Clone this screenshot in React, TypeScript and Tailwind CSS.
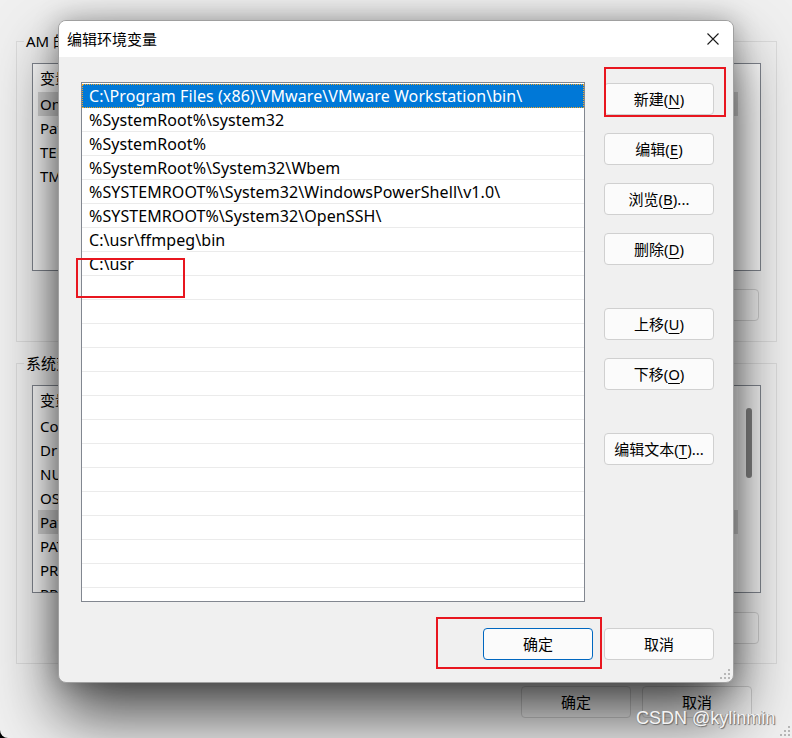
import React from "react";

const UI: React.CSSProperties = {
  fontFamily: '"Noto Sans", "Noto Sans CJK SC", sans-serif',
};

function U({ children }: { children: React.ReactNode }) {
  return <span className="underline decoration-1 underline-offset-[3px]">{children}</span>;
}

function WinButton({
  children,
  primary,
  faded,
}: {
  children?: React.ReactNode;
  primary?: boolean;
  faded?: boolean;
}) {
  return (
    <div
      className={`flex h-[32px] w-[110px] shrink-0 items-center justify-center rounded-[4px] border text-[15px] leading-none text-black ${
        primary ? "border-[#0067c0]" : faded ? "border-[#cfcfcf]" : "border-[#d0d0d0]"
      } ${faded ? "bg-[#f3f3f3]" : "bg-[#fbfbfb]"}`}
    >
      {children}
    </div>
  );
}

function Grip() {
  return (
    <svg width="10" height="10" viewBox="0 0 10 10">
      <rect x="8" y="0" width="2" height="2" fill="#b8b8b8" />
      <rect x="4" y="4" width="2" height="2" fill="#b8b8b8" />
      <rect x="8" y="4" width="2" height="2" fill="#b8b8b8" />
      <rect x="0" y="8" width="2" height="2" fill="#b8b8b8" />
      <rect x="4" y="8" width="2" height="2" fill="#b8b8b8" />
      <rect x="8" y="8" width="2" height="2" fill="#b8b8b8" />
    </svg>
  );
}

function BgList({
  items,
  selected,
  scrollbar,
}: {
  items: string[];
  selected: number;
  scrollbar?: boolean;
}) {
  return (
    <div className="flex h-[208px] w-[729px] overflow-hidden border border-[#828790] bg-white">
      <div className="flex-1">
        <div className="flex h-[28px] items-center pl-[7px] text-[15px] text-black">变量</div>
        {items.map((it, i) => (
          <div
            key={i}
            className={`ml-[5px] flex h-[24px] w-[700px] items-center pl-[2px] text-[15px] text-black ${
              i === selected ? "bg-[#d9d9d9]" : ""
            }`}
          >
            {it}
          </div>
        ))}
      </div>
      {scrollbar ? (
        <div className="flex w-[22px] shrink-0 justify-center bg-[#f7f7f7] pt-[22px]">
          <div className="h-[70px] w-[6px] rounded-[3px] bg-[#858585]" />
        </div>
      ) : null}
    </div>
  );
}

function GroupBox({
  title,
  children,
}: {
  title: string;
  children: React.ReactNode;
}) {
  return (
    <div className="relative h-[301px] w-[761px] border border-[#dcdcdc] px-[15px] pt-[21px]">
      <div className="absolute left-[7px] top-[-12px] bg-[#f0f0f0] px-[2px] text-[15px] leading-[22px] text-black">
        {title}
      </div>
      {children}
    </div>
  );
}

const paths = [
  "C:\\Program Files (x86)\\VMware\\VMware Workstation\\bin\\",
  "%SystemRoot%\\system32",
  "%SystemRoot%",
  "%SystemRoot%\\System32\\Wbem",
  "%SYSTEMROOT%\\System32\\WindowsPowerShell\\v1.0\\",
  "%SYSTEMROOT%\\System32\\OpenSSH\\",
  "C:\\usr\\ffmpeg\\bin",
  "C:\\usr",
];

export default function App() {
  const rows = [...paths, ...Array.from({ length: 15 }, () => "")];
  return (
    <div className="relative h-[738px] w-[792px] overflow-hidden bg-black" style={UI}>
      {/* Background window: 环境变量 */}
      <div className="flex h-full w-full flex-col rounded-bl-[8px] bg-[#f0f0f0] pl-[16px] pt-[41px]">
        <GroupBox title="AM 的用户变量(U)">
          <BgList items={["OneDrive", "Path", "TEMP", "TMP"]} selected={0} />
          <div className="mt-[18px] flex justify-end gap-[11px] pr-[2px]">
            <WinButton faded>新建(N)...</WinButton>
            <WinButton faded>编辑(E)...</WinButton>
            <WinButton faded>删除(D)</WinButton>
          </div>
        </GroupBox>
        <div className="mt-[21px]">
          <GroupBox title="系统变量(S)">
            <BgList
              items={[
                "ComSpec",
                "DriverData",
                "NUMBER_OF_PROCESSORS",
                "OS",
                "Path",
                "PATHEXT",
                "PROCESSOR_ARCHITECTURE",
                "PROCESSOR_IDENTIFIER",
              ]}
              selected={4}
              scrollbar
            />
            <div className="mt-[19px] flex justify-end gap-[11px] pr-[2px]">
              <WinButton faded>新建(W)...</WinButton>
              <WinButton faded>编辑(I)...</WinButton>
              <WinButton faded>删除(L)</WinButton>
            </div>
          </GroupBox>
        </div>
        <div className="mt-[22px] flex justify-end gap-[11px] pr-[40px]">
          <WinButton faded>确定</WinButton>
          <WinButton faded>取消</WinButton>
        </div>
      </div>
      <div className="absolute bottom-[2px] right-[2px]">
        <Grip />
      </div>

      {/* Dialog: 编辑环境变量 */}
      <div className="absolute left-[58px] top-[20px] flex h-[663px] w-[676px] flex-col overflow-hidden rounded-[8px] border border-[#a0a0a0] bg-[#f0f0f0] shadow-[0_32px_64px_rgba(0,0,0,0.7),0_0_26px_rgba(0,0,0,0.26)]">
        <div className="flex h-[36px] shrink-0 items-center justify-between bg-white pl-[8px] pr-[14px]">
          <span className="text-[15px] text-black">编辑环境变量</span>
          <svg width="12" height="12" viewBox="0 0 12 12">
            <path d="M0.5 0.5 L11.5 11.5 M11.5 0.5 L0.5 11.5" stroke="#1b1b1b" strokeWidth="1.1" />
          </svg>
        </div>
        <div className="flex pl-[22px] pt-[25px]">
          <div className="h-[520px] w-[504px] shrink-0 overflow-hidden border border-[#828790] bg-white pt-[1px]">
            {rows.map((r, i) =>
              i === 0 ? (
                <div key={i} className="flex h-[24px] items-center border border-dotted border-[#f5a623] bg-[#0078d7] pl-[6px] text-[16px] tracking-[0.08px] text-white">
                  {r}
                </div>
              ) : (
                <div key={i} className="flex h-[24px] items-center border-b border-[#ebebeb] pl-[7px] text-[16px] tracking-[0.08px] text-black">
                  {r}
                </div>
              )
            )}
          </div>
          <div className="ml-[19px] flex flex-col pt-[1px]">
            <WinButton>
              新建(<U>N</U>)
            </WinButton>
            <div className="mt-[18px]">
              <WinButton>
                编辑(<U>E</U>)
              </WinButton>
            </div>
            <div className="mt-[18px]">
              <WinButton>
                浏览(<U>B</U>)...
              </WinButton>
            </div>
            <div className="mt-[18px]">
              <WinButton>
                删除(<U>D</U>)
              </WinButton>
            </div>
            <div className="mt-[43px]">
              <WinButton>
                上移(<U>U</U>)
              </WinButton>
            </div>
            <div className="mt-[18px]">
              <WinButton>
                下移(<U>O</U>)
              </WinButton>
            </div>
            <div className="mt-[43px]">
              <WinButton>
                编辑文本(<U>T</U>)...
              </WinButton>
            </div>
          </div>
        </div>
        <div className="mt-[26px] flex justify-end gap-[11px] pr-[19px]">
          <WinButton primary>确定</WinButton>
          <WinButton>取消</WinButton>
        </div>
        <div className="absolute bottom-[3px] right-[3px]">
          <Grip />
        </div>
      </div>

      {/* Red annotation boxes */}
      <div className="absolute left-[604px] top-[67px] h-[50px] w-[122px] border-2 border-[#e8161f]" />
      <div className="absolute left-[76px] top-[258px] h-[40px] w-[109px] border-2 border-[#e8161f]" />
      <div className="absolute left-[436px] top-[617px] h-[52px] w-[166px] border-2 border-[#e8161f]" />

      {/* Watermark */}
      <div
        className="absolute left-[636px] top-[706px] text-[18px] leading-[24px] text-[#f4f4f4]"
        style={{
          fontFamily: '"Liberation Sans", Arial, sans-serif',
          textShadow: "1px 1px 1px #6b6b6b, -1px 0 0 #9a9a9a",
        }}
      >
        CSDN @kylinmin
      </div>
    </div>
  );
}
